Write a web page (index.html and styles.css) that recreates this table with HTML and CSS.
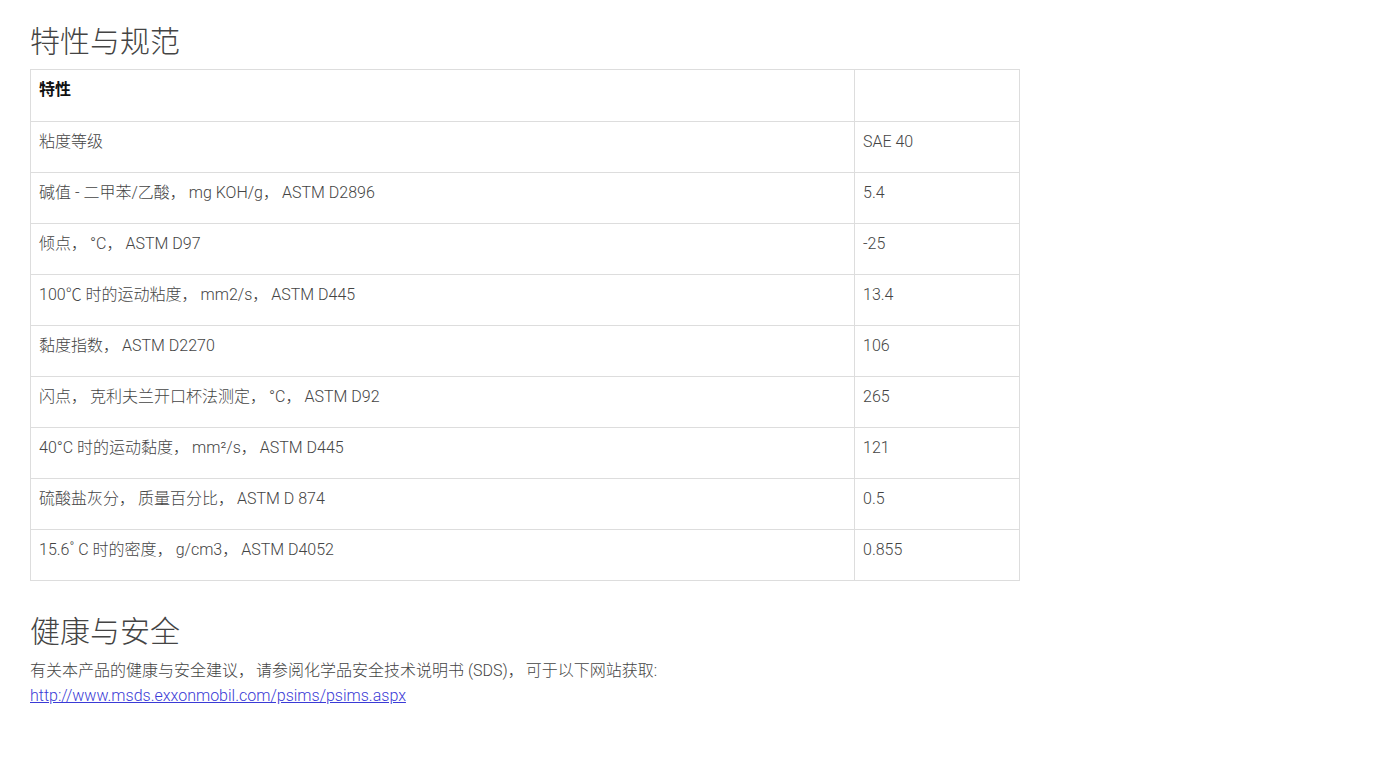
FILE: index.html
```html
<!DOCTYPE html>
<html lang="zh-CN">
<head>
<meta charset="utf-8">
<link rel="stylesheet" href="styles.css">
</head>
<body>
<div class="page">
  <h2 class="section-title">特性与规范</h2>
  <table class="spec">
    <tr class="head"><td class="c1">特性</td><td class="c2"></td></tr>
    <tr><td class="c1">粘度等级</td><td class="c2">SAE 40</td></tr>
    <tr><td class="c1">碱值 - 二甲苯/乙酸<span class="cm">，</span>mg KOH/g<span class="cm">，</span>ASTM D2896</td><td class="c2">5.4</td></tr>
    <tr><td class="c1">倾点<span class="cm">，</span>°C<span class="cm">，</span>ASTM D97</td><td class="c2">-25</td></tr>
    <tr><td class="c1">100℃ 时的运动粘度<span class="cm">，</span>mm2/s<span class="cm">，</span>ASTM D445</td><td class="c2">13.4</td></tr>
    <tr><td class="c1">黏度指数<span class="cm">，</span>ASTM D2270</td><td class="c2">106</td></tr>
    <tr><td class="c1">闪点<span class="cm">，</span>克利夫兰开口杯法测定<span class="cm">，</span>°C<span class="cm">，</span>ASTM D92</td><td class="c2">265</td></tr>
    <tr><td class="c1">40°C 时的运动黏度<span class="cm">，</span>mm²/s<span class="cm">，</span>ASTM D445</td><td class="c2">121</td></tr>
    <tr><td class="c1">硫酸盐灰分<span class="cm">，</span>质量百分比<span class="cm">，</span>ASTM D 874</td><td class="c2">0.5</td></tr>
    <tr><td class="c1">15.6˚ C 时的密度<span class="cm">，</span>g/cm3<span class="cm">，</span>ASTM D4052</td><td class="c2">0.855</td></tr>
  </table>
  <h2 class="section-title second">健康与安全</h2>
  <p class="note">有关本产品的健康与安全建议<span class="cm2">，</span>请参阅化学品安全技术说明书 (SDS)<span class="cm2">，</span>可于以下网站获取:<br><a href="#">http://www.msds.exxonmobil.com/psims/psims.aspx</a></p>
</div>
</body>
</html>
```

FILE: styles.css
```css
html, body {
  margin: 0;
  padding: 0;
  background: #fff;
}
body {
  font-family: Roboto, "Noto Sans CJK SC", sans-serif;
  font-weight: 300;
  color: #444;
  font-size: 16px;
}
.page {
  padding: 20px 30px;
}
.section-title {
  margin: 0;
  font-size: 30px;
  font-weight: 300;
  line-height: 44px;
  color: #444;
}
.spec {
  border-collapse: collapse;
  width: 990px;
  margin-top: 5px;
}
.spec td {
  border: 1px solid #ddd;
  height: 51px;
  vertical-align: top;
  padding: 10px 8px 0 8px;
  line-height: 20px;
  box-sizing: border-box;
}
.spec .c2 {
  width: 165px;
}
.spec .head td {
  color: #111;
  font-weight: bold;
  height: 52px;
}
.cm {
  margin-right: 3px;
}
.cm2 {
  margin-right: 2px;
}
.second {
  margin-top: 29px;
}
.note {
  margin: 4px 0 0 0;
  line-height: 25px;
}
.note a {
  color: #3a3ad6;
}
```
